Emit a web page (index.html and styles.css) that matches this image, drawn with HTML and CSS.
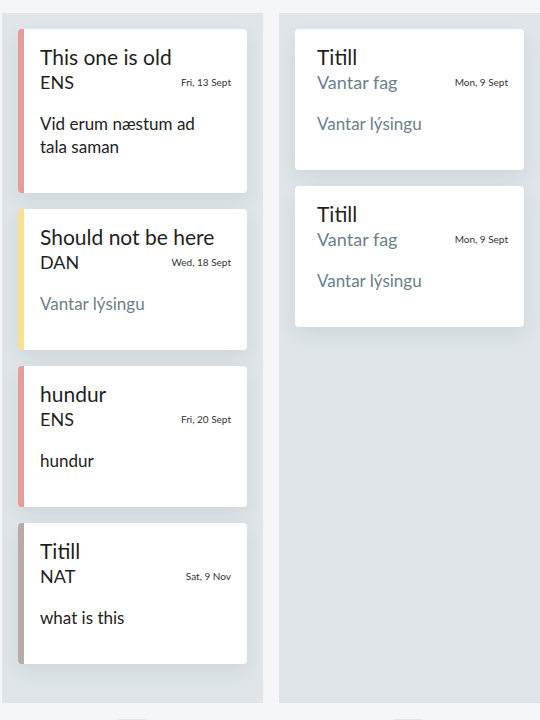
FILE: index.html
```html
<!DOCTYPE html>
<html>
<head>
<meta charset="utf-8">
<link rel="stylesheet" href="styles.css">
</head>
<body>
<div class="board">
  <section class="column">
    <div class="cards">
      <article class="card accent-red">
        <h2 class="title">This one is old</h2>
        <div class="meta"><span class="subject">ENS</span><span class="date">Fri, 13 Sept</span></div>
        <p class="desc">Vid erum næstum ad tala saman</p>
      </article>
      <article class="card accent-yellow">
        <h2 class="title">Should not be here</h2>
        <div class="meta"><span class="subject">DAN</span><span class="date">Wed, 18 Sept</span></div>
        <p class="desc missing">Vantar lýsingu</p>
      </article>
      <article class="card accent-red">
        <h2 class="title">hundur</h2>
        <div class="meta"><span class="subject">ENS</span><span class="date">Fri, 20 Sept</span></div>
        <p class="desc">hundur</p>
      </article>
      <article class="card accent-taupe">
        <h2 class="title">Titill</h2>
        <div class="meta"><span class="subject">NAT</span><span class="date">Sat, 9 Nov</span></div>
        <p class="desc">what is this</p>
      </article>
    </div>
    <div class="col-foot"><span class="col-btn btn-left"></span></div>
  </section>
  <section class="column">
    <div class="cards">
      <article class="card">
        <h2 class="title">Titill</h2>
        <div class="meta"><span class="subject missing">Vantar fag</span><span class="date">Mon, 9 Sept</span></div>
        <p class="desc missing">Vantar lýsingu</p>
      </article>
      <article class="card">
        <h2 class="title">Titill</h2>
        <div class="meta"><span class="subject missing">Vantar fag</span><span class="date">Mon, 9 Sept</span></div>
        <p class="desc missing">Vantar lýsingu</p>
      </article>
    </div>
    <div class="col-foot"><span class="col-btn btn-right"></span></div>
  </section>
</div>
</body>
</html>
```
FILE: styles.css
```css
html, body {
  margin: 0;
  padding: 0;
  background: #f5f6f8;
  height: 100%;
  overflow: hidden;
}
body {
  font-family: "Lato", "Open Sans", sans-serif;
  color: #222;
}
.board {
  display: grid;
  grid-template-columns: 261px 261px;
  column-gap: 16px;
  padding: 13px 0 0 2px;
}
.column {
  display: flex;
  flex-direction: column;
}
.cards {
  background: #dfe5e8;
  height: 658px;
  padding: 16px;
  display: flex;
  flex-direction: column;
  gap: 16px;
}
.card {
  background: #fff;
  border-radius: 4px;
  padding: 14px 16px 35px 22px;
  box-shadow: 0 8px 18px rgba(60, 80, 90, 0.09);
}
.accent-red,
.accent-yellow,
.accent-taupe { padding-left: 16px; border-left: 6px solid transparent; }
.accent-red { border-left-color: #e59c99; }
.accent-yellow { border-left-color: #fbe08d; }
.accent-taupe { border-left-color: #b9aaa4; }
.title {
  margin: 0;
  font-size: 21px;
  font-weight: 400;
  line-height: 27px;
  color: #1f1f1f;
}
.meta {
  display: flex;
  justify-content: space-between;
  align-items: center;
  line-height: 24px;
}
.subject {
  font-size: 18px;
  color: #1f1f1f;
}
.date {
  font-size: 10px;
  color: #333;
}
.desc {
  margin: 18px 12px 0 0;
  font-size: 17px;
  line-height: 23px;
  color: #222;
}
.missing {
  color: #6b7f8c;
}
.col-foot {
  height: 20px;
  position: relative;
}
.col-btn {
  position: absolute;
  top: 16px;
  width: 30px;
  height: 8px;
  border-radius: 3px;
  background: #e3e6e9;
}
.btn-left { left: 115px; }
.btn-right { left: 114px; }
```
